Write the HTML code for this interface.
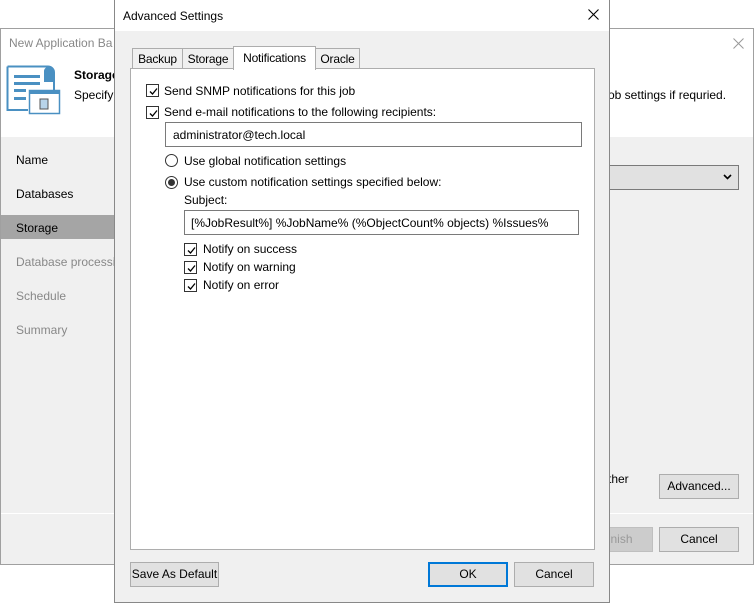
<!DOCTYPE html>
<html><head><style>
*{margin:0;padding:0;box-sizing:border-box}
body{width:754px;height:603px;background:#fff;position:relative;overflow:hidden;font-family:"Liberation Sans",sans-serif;font-size:12px;color:#000}
.a{position:absolute}
.cb{position:absolute;width:13px;height:13px;border:1px solid #333;background:#fff}
.cb svg{position:absolute;left:1px;top:1px}
.rb{position:absolute;width:13px;height:13px;border:1px solid #333;border-radius:50%;background:#fff}
.btn{position:absolute;background:#e1e1e1;border:1px solid #adadad;text-align:center;line-height:22px}
.tab{position:absolute;border:1px solid #adadad;border-bottom:none;background:#f0f0f0;text-align:center;line-height:20px;letter-spacing:-0.2px}
</style></head><body>
<!-- background window -->
<div class="a" style="left:0;top:28px;width:754px;height:537px;border:1px solid #a0a0a0;background:#f0f0f0"></div>
<div class="a" style="left:1px;top:29px;width:752px;height:108px;background:#fff"></div>
<div class="a" style="left:9px;top:36px;color:#888;font-size:12px">New Application Ba</div>
<svg class="a" style="left:733px;top:38px" width="11" height="11"><path d="M0.5 0.5 L10.5 10.5 M10.5 0.5 L0.5 10.5" stroke="#999" stroke-width="1"/></svg>
<svg class="a" style="left:6px;top:64px" width="56" height="56" viewBox="0 0 56 56">
<path d="M1.5 2.5 H42 a6 6 0 0 1 6 6 V30 M1.5 2.5 V46 H22" fill="none" stroke="#4a90c2" stroke-width="2"/>
<path d="M41 3 a7 7 0 0 1 7 7 V18 H38 V8 a5 5 0 0 1 3-5z" fill="#4a90c2"/>
<rect x="8" y="11" width="26" height="3" fill="#4a90c2"/><rect x="8" y="18" width="26" height="3" fill="#4a90c2"/>
<rect x="8" y="25" width="12" height="3" fill="#4a90c2"/><rect x="8" y="33" width="12" height="3" fill="#4a90c2"/>
<rect x="23.5" y="26.5" width="30" height="23" fill="#fff" stroke="#4a90c2" stroke-width="1.5"/>
<rect x="23" y="26" width="31" height="4" fill="#4a90c2"/>
<rect x="34" y="35" width="8" height="10" fill="#b8d4ea" stroke="#555" stroke-width="1"/>
</svg>
<div class="a" style="left:74px;top:68px;font-weight:bold">Storage</div>
<div class="a" style="left:74px;top:88px">Specify</div>
<div class="a" style="left:608px;top:88px">ob settings if requried.</div>
<div class="a" style="left:16px;top:153px">Name</div>
<div class="a" style="left:16px;top:187px">Databases</div>
<div class="a" style="left:1px;top:215px;width:120px;height:24px;background:#a5a5a5"></div>
<div class="a" style="left:16px;top:221px">Storage</div>
<div class="a" style="left:16px;top:255px;color:#888">Database processing</div>
<div class="a" style="left:16px;top:289px;color:#888">Schedule</div>
<div class="a" style="left:16px;top:323px;color:#888">Summary</div>
<div class="a" style="left:590px;top:165px;width:149px;height:25px;background:#e1e1e1;border:1px solid #7a7a7a"></div>
<svg class="a" style="left:723px;top:174px" width="9" height="6"><path d="M1 1 L4.5 4.5 L8 1" fill="none" stroke="#000" stroke-width="1.6"/></svg>
<div class="a" style="left:608px;top:472px">ther</div>
<div class="btn" style="left:659px;top:474px;width:80px;height:25px">Advanced...</div>
<div class="a" style="left:1px;top:513px;width:752px;height:1px;background:#fff"></div>
<div class="btn" style="left:580px;top:527px;width:73px;height:25px;background:#ccc;border-color:#bfbfbf;color:#999">Finish</div>
<div class="btn" style="left:659px;top:527px;width:80px;height:25px">Cancel</div>
<!-- dialog -->
<div class="a" style="left:114px;top:0;width:496px;height:603px;border:1px solid #888;background:#f0f0f0"></div>
<div class="a" style="left:115px;top:0;width:494px;height:31px;background:#fff"></div>
<div class="a" style="left:123px;top:9px">Advanced Settings</div>
<svg class="a" style="left:588px;top:9px" width="11" height="11"><path d="M0.5 0.5 L10.5 10.5 M10.5 0.5 L0.5 10.5" stroke="#000" stroke-width="1.1"/></svg>
<div class="tab" style="left:132px;top:48px;width:51px;height:21px">Backup</div>
<div class="tab" style="left:182px;top:48px;width:52px;height:21px">Storage</div>
<div class="tab" style="left:315px;top:48px;width:45px;height:21px">Oracle</div>
<div class="a" style="left:130px;top:68px;width:465px;height:482px;border:1px solid #adadad;background:#fff"></div>
<div class="tab" style="left:233px;top:46px;width:83px;height:24px;background:#fff;line-height:22px">Notifications</div>
<div class="cb" style="left:146px;top:84px"><svg width="11" height="11"><path d="M2 5.5 L4.5 8 L9 2.5" fill="none" stroke="#000" stroke-width="1.3"/></svg></div>
<div class="a" style="left:164px;top:84px">Send SNMP notifications for this job</div>
<div class="cb" style="left:146px;top:106px"><svg width="11" height="11"><path d="M2 5.5 L4.5 8 L9 2.5" fill="none" stroke="#000" stroke-width="1.3"/></svg></div>
<div class="a" style="left:164px;top:105px">Send e-mail notifications to the following recipients:</div>
<div class="a" style="left:165px;top:122px;width:417px;height:25px;border:1px solid #7a7a7a;padding:5px 0 0 7px">administrator@tech.local</div>
<div class="rb" style="left:165px;top:154px"></div>
<div class="a" style="left:184px;top:154px">Use global notification settings</div>
<div class="rb" style="left:165px;top:176px"><div class="a" style="left:2px;top:2px;width:7px;height:7px;border-radius:50%;background:#333"></div></div>
<div class="a" style="left:184px;top:175px">Use custom notification settings specified below:</div>
<div class="a" style="left:184px;top:193px">Subject:</div>
<div class="a" style="left:184px;top:210px;width:395px;height:25px;border:1px solid #7a7a7a;padding:5px 0 0 6px">[%JobResult%] %JobName% (%ObjectCount% objects) %Issues%</div>
<div class="cb" style="left:184px;top:243px"><svg width="11" height="11"><path d="M2 5.5 L4.5 8 L9 2.5" fill="none" stroke="#000" stroke-width="1.3"/></svg></div>
<div class="a" style="left:203px;top:242px">Notify on success</div>
<div class="cb" style="left:184px;top:261px"><svg width="11" height="11"><path d="M2 5.5 L4.5 8 L9 2.5" fill="none" stroke="#000" stroke-width="1.3"/></svg></div>
<div class="a" style="left:203px;top:260px">Notify on warning</div>
<div class="cb" style="left:184px;top:279px"><svg width="11" height="11"><path d="M2 5.5 L4.5 8 L9 2.5" fill="none" stroke="#000" stroke-width="1.3"/></svg></div>
<div class="a" style="left:203px;top:278px">Notify on error</div>
<div class="btn" style="left:130px;top:562px;width:89px;height:25px">Save As Default</div>
<div class="btn" style="left:428px;top:562px;width:80px;height:25px;border:2px solid #0078d7;line-height:21px">OK</div>
<div class="btn" style="left:514px;top:562px;width:80px;height:25px">Cancel</div>
</body></html>
